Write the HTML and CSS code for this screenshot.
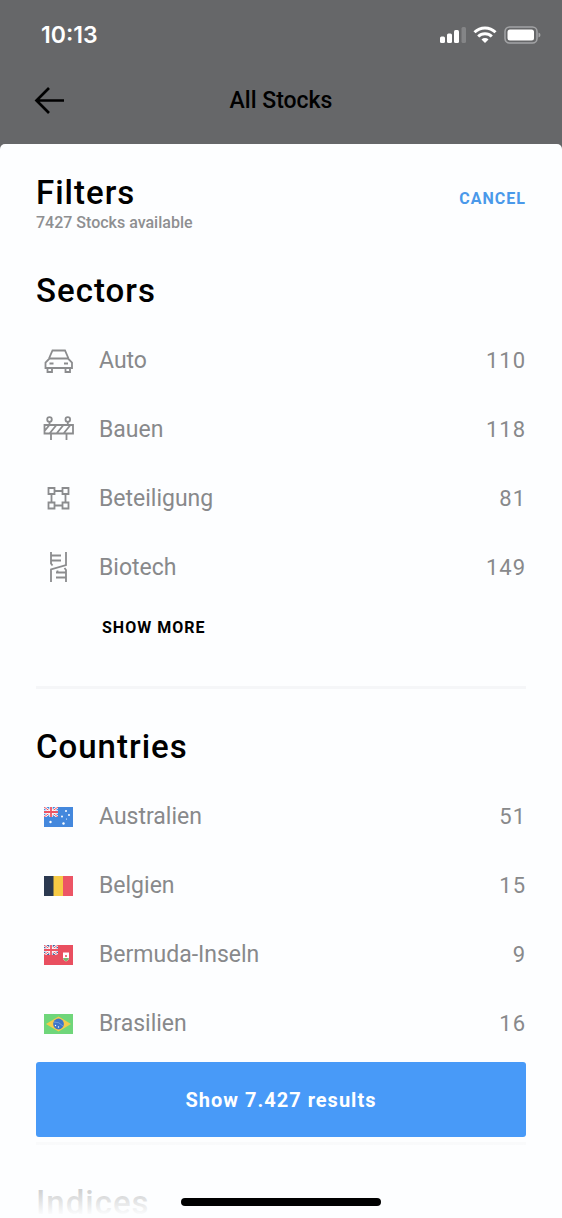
FILE: index.html
```html
<!DOCTYPE html>
<html lang="en">
<head>
<meta charset="utf-8">
<meta name="viewport" content="width=device-width, initial-scale=1">
<title>All Stocks – Filters</title>
<link rel="stylesheet" href="styles.css">
</head>
<body>
<svg class="defs" aria-hidden="true">
  <symbol id="jack" viewBox="0 0 14 10">
    <path d="M0 0l14 10M14 0L0 10" stroke="#fff" stroke-width="2.600"/>
    <path d="M0 0l14 10M14 0L0 10" stroke="#ec5565" stroke-width="1"/>
    <path d="M7 0v10M0 5h14" stroke="#fff" stroke-width="3.400"/>
    <path d="M7 0v10M0 5h14" stroke="#ec5565" stroke-width="1.800"/>
  </symbol>
</svg>
<div class="status">
  <span class="time">10:13</span>
  <div class="signals">
    <svg width="26" height="18" viewBox="0 0 26 18" fill="#fff"><rect y="10.500" width="5" height="6.500" rx="1.500"/><rect x="7" y="7.500" width="5" height="9.500" rx="1.500"/><rect x="14" y="4" width="5" height="13" rx="1.500"/><rect x="21.500" y="1" width="4.500" height="16" rx="1.500" opacity=".2"/></svg>
    <svg width="24" height="18" viewBox="0 0 24 18" fill="none" stroke="#fff" stroke-width="3"><path d="M1.500 6.200a15 15 0 0 1 21 0M5.200 10.500a9.700 9.700 0 0 1 13.600 0"/><path d="M12 17l-3.500-3.500a5 5 0 0 1 7 0z" fill="#fff" stroke="none"/></svg>
    <svg width="37" height="18" viewBox="0 0 37 18"><rect x="1" y="1" width="32" height="16" rx="4.500" fill="none" stroke="#a3a4a6" stroke-width="1.500"/><rect x="3.500" y="3.500" width="26.500" height="11" rx="2.500" fill="#fff"/><path d="M34.500 6.500q2 .6 2 2.500t-2 2.500z" fill="#a3a4a6"/></svg>
  </div>
</div>
<header class="nav">
  <button class="back" aria-label="Back"><svg width="32" height="28" viewBox="0 0 32 28" fill="none" stroke="#000" stroke-width="2.700"><path d="M15 1L2.500 13.500 15 26M2.500 13.500H30"/></svg></button>
  <h1 class="nav-title">All Stocks</h1>
</header>
<main class="sheet">
  <div class="content">
    <div class="sheet-head">
      <div>
        <h2 class="title">Filters</h2>
        <p class="available">7427 Stocks available</p>
      </div>
      <button class="cancel">CANCEL</button>
    </div>

    <section class="group">
      <h2 class="title">Sectors</h2>
      <ul class="list">
        <li><button class="row"><svg class="icon" viewBox="0 0 32 32"><path d="M6 13.500L9.500 5.500h12.500L25.500 13.500M6.500 13.500h18.500l4 4v5.500H2.500v-5.500zM4.500 23v4h4.500v-4M22.500 23v4H27v-4M6.500 18.500h4M21 18.500h4"/></svg><span class="name">Auto</span><span class="count">110</span></button></li>
        <li><button class="row"><svg class="icon" viewBox="0 0 32 32"><circle cx="6.500" cy="5.500" r="2.300"/><circle cx="24.800" cy="5.500" r="2.300"/><path d="M6.500 8v3M24.800 8v3M1.500 11h28.500v8.500H1.500zM8 19.500V26M23.500 19.500V26M1.500 17l5-6M6.500 19.500l7-8.500M13.500 19.500l7-8.500M20.500 19.500l7-8.500"/></svg><span class="name">Bauen</span><span class="count">118</span></button></li>
        <li><button class="row"><svg class="icon" viewBox="0 0 32 32"><path d="M5.500 5h6v6h-6zM19.500 5h6v6h-6zM5.500 19.500h6v6h-6zM19.500 19.500h6v6h-6zM11.500 8h8M11.500 22.500h8M8.500 11v8.500M22.500 11v8.500"/></svg><span class="name">Beteiligung</span><span class="count">81</span></button></li>
        <li><button class="row"><svg class="icon" viewBox="0 0 32 32"><path d="M8 0v11.500l1.500 2M23 0v13L8 17.500V30M23 30V18l-1.500-2M8 3.500h10M8 8.500h10M13 20.500h10M13 25.500h10M14.500 20.500v-2"/></svg><span class="name">Biotech</span><span class="count">149</span></button></li>
      </ul>
      <button class="more">SHOW MORE</button>
    </section>

    <section class="group">
      <h2 class="title">Countries</h2>
      <ul class="list">
        <li><button class="row"><svg class="flag" viewBox="0 0 29 20"><path fill="#4488dd" d="M0 0h29v20H0z"/><use href="#jack" width="14" height="10"/><g fill="#fff"><circle cx="6.500" cy="15" r="1.200"/><circle cx="22" cy="4" r="1"/><circle cx="18" cy="9.500" r="1"/><circle cx="25" cy="8" r="1"/><circle cx="22.500" cy="12" r=".6"/><circle cx="19.500" cy="16.500" r="1.200"/></g></svg><span class="name">Australien</span><span class="count">51</span></button></li>
        <li><button class="row"><svg class="flag" viewBox="0 0 29 20"><path fill="#2b3950" d="M0 0h10v20H0z"/><path fill="#f6ca45" d="M9.500 0H19v20H9.500z"/><path fill="#ec5565" d="M19 0h10v20H19z"/></svg><span class="name">Belgien</span><span class="count">15</span></button></li>
        <li><button class="row"><svg class="flag" viewBox="0 0 29 20"><path fill="#e94f60" d="M0 0h29v20H0z"/><path fill="#4a5f9c" d="M0 0h14v10H0z"/><use href="#jack" width="14" height="10"/><path fill="#fff" d="M19 7.500h6v5.500q0 2-3 3.500-3-1.500-3-3.500z"/><path fill="#7ab870" d="M19 13h6q-.5 2.200-3 3.500-2.500-1.300-3-3.500z"/><path fill="#e94f60" d="M21.200 10h1.600v2h-1.600z"/></svg><span class="name">Bermuda-Inseln</span><span class="count">9</span></button></li>
        <li><button class="row"><svg class="flag" viewBox="0 0 29 20"><path fill="#6fd67a" d="M0 0h29v20H0z"/><path fill="#f4cb4b" d="M14.500 2.500L27 10l-12.500 7.500L2 10z"/><circle cx="14.500" cy="10" r="5.400" fill="#3d75c9"/><path d="M10 8q5-.5 9 4" fill="none" stroke="#78a5e0" stroke-width=".8"/><circle cx="11.500" cy="11.500" r=".7" fill="#fff"/><circle cx="14.500" cy="13" r=".7" fill="#fff"/></svg><span class="name">Brasilien</span><span class="count">16</span></button></li>
      </ul>
      <button class="more">SHOW MORE</button>
    </section>

    <section class="group">
      <h2 class="title">Indices</h2>
    </section>
  </div>
  <div class="footer">
    <button class="apply">Show 7.427 results</button>
    <div class="home"></div>
  </div>
</main>
</body>
</html>
```
FILE: styles.css
```css
* { box-sizing: border-box; margin: 0; padding: 0; }
html, body { height: 100%; }
body {
  display: flex;
  flex-direction: column;
  overflow: hidden;
  background: #666769;
  color: #000;
  font-family: Roboto, "Liberation Sans", sans-serif;
}
button { border: 0; background: none; font: inherit; color: inherit; cursor: pointer; }
ul { list-style: none; }
svg { display: block; flex: none; }
.defs { position: absolute; width: 0; height: 0; }

.status {
  display: flex;
  justify-content: space-between;
  align-items: center;
  height: 70px;
  padding: 0 21px 0 41px;
  color: #fff;
}
.time { font: 600 23px Inter, sans-serif; }
.signals { display: flex; align-items: center; gap: 7px; }

.nav {
  display: grid;
  grid-template-columns: 32px 1fr 32px;
  align-items: center;
  height: 74px;
  padding: 0 34px 12px;
}
.back { height: 28px; }
.nav-title { text-align: center; font-size: 23px; font-weight: 500; line-height: 28px; }

.sheet {
  position: relative;
  flex: 1;
  min-height: 0;
  overflow: hidden;
  border-radius: 5px 5px 0 0;
  background: #fdfeff;
}
.content { height: 100%; padding: 30px 36px 0; overflow: hidden; }
.sheet-head {
  display: flex;
  justify-content: space-between;
  align-items: flex-start;
  height: 59px;
  padding-top: 3px;
}
.title { font-size: 33px; font-weight: 500; letter-spacing: 1px; line-height: 32px; }
.available { padding-top: 4px; color: #8e8f91; font-size: 16px; font-weight: 500; line-height: 20px; }
.cancel { margin-top: 10px; color: #4a99ea; font-size: 16px; font-weight: 700; letter-spacing: 1px; line-height: 24px; }

.group { padding-top: 42px; }
.list { padding-top: 19px; }
.row {
  display: flex;
  align-items: center;
  width: 100%;
  height: 69px;
  padding-left: 7px;
  color: #88898b;
  font-size: 23px;
  text-align: left;
}
.icon { width: 32px; height: 32px; fill: none; stroke: #8b8c8e; stroke-width: 1.8; }
.flag { width: 29px; height: 20px; margin: 0 2px 0 1px; }
.name { flex: 1; padding-left: 24px; }
.count { font-size: 22px; letter-spacing: 1px; }
.more {
  display: block;
  margin: 14px 0 0 66px;
  font-size: 16px;
  font-weight: 700;
  letter-spacing: 1px;
  line-height: 24px;
}
.group:has(.more) { padding-bottom: 46px; border-bottom: 3px solid #f5f6f8; }

.footer {
  position: absolute;
  inset: auto 0 0;
  padding: 0 36px 12px;
  background: linear-gradient(#fdfeff00 10px, #fdfeff 154px);
}
.apply {
  display: block;
  width: 100%;
  height: 75px;
  border-radius: 3px;
  background: #489af8;
  color: #fff;
  font-size: 20px;
  font-weight: 700;
  letter-spacing: 1px;
}
.home { width: 200px; height: 8px; margin: 61px auto 0; border-radius: 4px; background: #000; }
```
